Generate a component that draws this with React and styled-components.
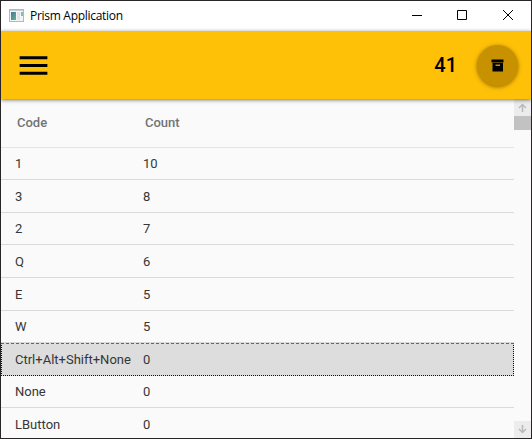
import React from "react";
import styled, { createGlobalStyle } from "styled-components";

const GlobalStyle = createGlobalStyle`
  * { box-sizing: border-box; }
  html, body { margin: 0; padding: 0; overflow: hidden; }
`;

const Window = styled.div`
  width: 532px;
  height: 439px;
  border: 1px solid #282526;
  background: #fafafa;
  display: flex;
  flex-direction: column;
  overflow: hidden;
  font-family: Roboto, sans-serif;
`;

const TitleBar = styled.header`
  height: 30px;
  flex: none;
  display: flex;
  align-items: center;
  background: #fff;
  padding-left: 8px;
`;

const Title = styled.span`
  flex: 1;
  margin-left: 5px;
  font: 12px/16px "Open Sans", "Noto Sans", sans-serif;
  letter-spacing: -0.29px;
  color: #000;
`;

const Caption = styled.div`
  width: 46px;
  height: 30px;
  flex: none;
  display: flex;
  svg { display: block; }
`;

const AppBar = styled.div`
  height: 68px;
  flex: none;
  display: flex;
  align-items: center;
  padding: 0 13px 0 14px;
  background: #ffc107;
  box-shadow: 0 1px 4px rgba(0, 0, 0, 0.55);
  z-index: 1;
`;

const Total = styled.span`
  margin-left: auto;
  margin-right: 20px;
  font-size: 20px;
  line-height: 24px;
  font-weight: 500;
  color: #000;
`;

const RoundButton = styled.button`
  width: 41px;
  height: 41px;
  padding: 0;
  border: 0;
  border-radius: 50%;
  display: flex;
  align-items: center;
  justify-content: center;
  background: #c79100;
  box-shadow: 0 1px 4px rgba(80, 50, 0, 0.6);
  svg { display: block; }
`;

const Content = styled.main`
  flex: 1;
  min-height: 0;
  display: flex;
`;

const Table = styled.div`
  width: 513px;
  overflow: hidden;
`;

const Row = styled.div`
  height: ${({ $height }) => $height}px;
  display: grid;
  grid-template-columns: 128px 1fr;
  align-items: start;
  padding: ${({ $height }) => $height - 24}px 0 0 14px;
  border-bottom: 1px solid #dadada;
  font-size: 13px;
  line-height: 15px;
  color: #363636;
`;

const SelectedRow = styled(Row)`
  background: #dddddd;
  padding: ${({ $height }) => $height - 25}px 0 0 13px;
  border: 1px dotted #111;
  border-top: 1px dashed #666;
`;

const HeaderRow = styled(Row)`
  padding: 16px 0 0 16px;
  border-bottom-color: #e4e4e4;
  font-weight: 500;
  color: #737373;
`;

const ScrollBar = styled.div`
  width: 17px;
  display: flex;
  flex-direction: column;
  justify-content: space-between;
`;

const ScrollArrow = styled.div`
  width: 17px;
  height: 17px;
  background: #ececec;
  svg { display: block; }
`;

const Thumb = styled.div`
  height: 14px;
  margin-bottom: auto;
  background: #c2c2c2;
`;

const rows = [
  { code: "1", count: 10, height: 32 },
  { code: "3", count: 8, height: 33 },
  { code: "2", count: 7, height: 32 },
  { code: "Q", count: 6, height: 33 },
  { code: "E", count: 5, height: 33 },
  { code: "W", count: 5, height: 32 },
  { code: "Ctrl+Alt+Shift+None", count: 0, height: 33, selected: true },
  { code: "None", count: 0, height: 32 },
  { code: "LButton", count: 0, height: 33 },
];

function AppIcon() {
  return (
    <svg width="16" height="14" viewBox="0 0 16 14">
      <defs>
        <linearGradient id="screen" x1="0" y1="0" x2="1" y2="1">
          <stop offset="0" stopColor="#4775a0" />
          <stop offset="1" stopColor="#62b589" />
        </linearGradient>
      </defs>
      <rect x="0.5" y="0.5" width="14" height="12" fill="#f5f5f5" stroke="#b4b8bb" />
      <path d="M1 1.5h13" stroke="#c9ced2" />
      <rect x="2" y="3" width="5" height="8" fill="url(#screen)" />
      <rect x="8" y="3" width="3" height="8" fill="#e2e5e8" />
      <rect x="12" y="3" width="2" height="4" fill="#8db6b4" />
    </svg>
  );
}

function CaptionIcon({ d }) {
  return (
    <Caption>
      <svg width="46" height="30" viewBox="0 0 46 30">
        <path d={d} fill="none" stroke="#000" />
      </svg>
    </Caption>
  );
}

function Arrow({ d }) {
  return (
    <ScrollArrow>
      <svg width="17" height="17" viewBox="0 0 17 17">
        <path d={d} fill="none" stroke="#b9b9b9" strokeWidth="1.5" />
      </svg>
    </ScrollArrow>
  );
}

export default function App() {
  return (
    <>
      <GlobalStyle />
      <Window>
        <TitleBar>
          <AppIcon />
          <Title>Prism Application</Title>
          <CaptionIcon d="M19 14.5h10" />
          <CaptionIcon d="M18.5 9.5h9v9h-9z" />
          <CaptionIcon d="M18 9l10 10M28 9l-10 10" />
        </TitleBar>
        <AppBar>
          <svg width="37" height="37" viewBox="0 0 24 24">
            <path d="M3 6h18v2H3zM3 11h18v2H3zM3 16h18v2H3z" fill="#000" />
          </svg>
          <Total>41</Total>
          <RoundButton aria-label="Archive">
            <svg width="17" height="17" viewBox="0 0 17 17">
              <path d="M2.5 2.5h12v3h-12zM3.5 6h10.5v8.500H3.500zM6.500 7.500v1.500h4.500v-1.500z" fill="#000" fillRule="evenodd" />
            </svg>
          </RoundButton>
        </AppBar>
        <Content>
          <Table>
            <HeaderRow $height={49}><span>Code</span><span>Count</span></HeaderRow>
            {rows.map(({ code, count, height, selected }) => {
              const Line = selected ? SelectedRow : Row;
              return (
                <Line key={code} $height={height}>
                  <span>{code}</span>
                  <span>{count}</span>
                </Line>
              );
            })}
          </Table>
          <ScrollBar>
            <Arrow d="M8.5 13V5.5M5 9l3.500-3.500L12 9" />
            <Thumb />
            <Arrow d="M8.500 4v7.500M5 8l3.500 3.500L12 8" />
          </ScrollBar>
        </Content>
      </Window>
    </>
  );
}
